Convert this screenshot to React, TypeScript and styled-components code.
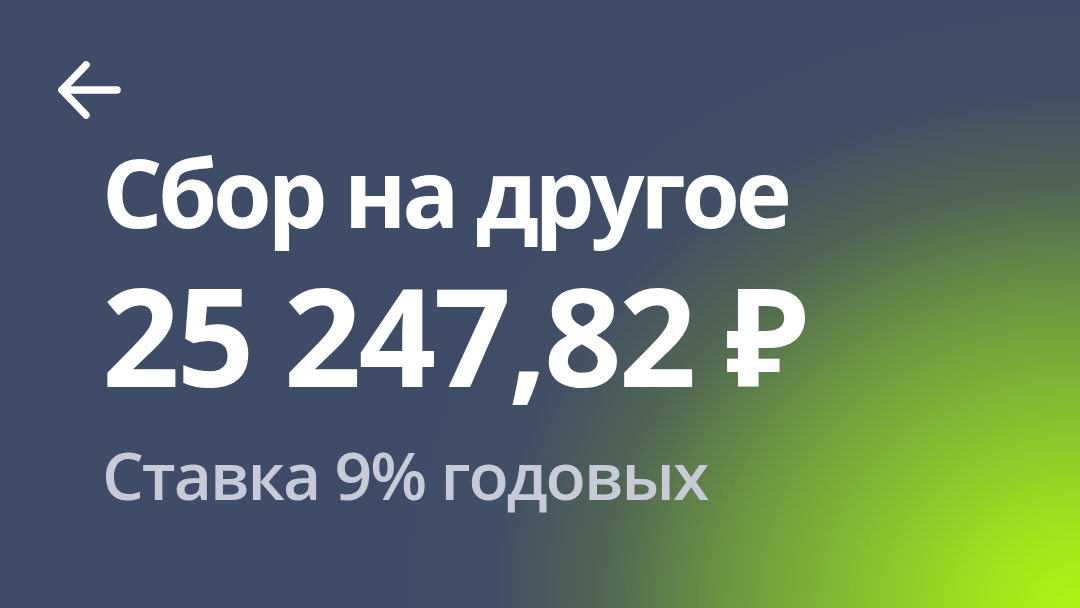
import React from "react";
import styled, { createGlobalStyle } from "styled-components";

const GlobalStyle = createGlobalStyle`
    html, body {
        margin: 0;
        padding: 0;
    }
    body {
        font-family: "Open Sans", "Noto Sans", sans-serif;
    }
`;

const Screen = styled.div`
    width: 1080px;
    height: 608px;
    overflow: hidden;
    box-sizing: border-box;
    padding: 52px 0 0 56px;
    display: flex;
    flex-direction: column;
    background:
        radial-gradient(ellipse 680px 600px at 1080px 610px, #b0f414 0%, #a3e51b 13%, #88c02f 32%, #6c9641 52%, rgba(84, 107, 80, 0.85) 70%, rgba(68, 84, 98, 0.45) 86%, rgba(62, 76, 103, 0) 100%),
        #3e4c67;
`;

const BackButton = styled.button`
    width: 72px;
    height: 76px;
    padding: 0;
    border: none;
    background: none;
    cursor: pointer;
    display: flex;
    align-items: center;
    justify-content: flex-start;
`;

const Content = styled.div`
    padding-left: 46px;
    display: flex;
    flex-direction: column;
`;

const Title = styled.h1`
    margin: 8px 0 0;
    font-size: 95px;
    font-weight: 700;
    line-height: 110px;
    color: #ffffff;
    letter-spacing: -4.3px;
`;

const Amount = styled.div`
    margin-top: 14px;
    font-size: 136px;
    font-weight: 700;
    line-height: 150px;
    color: #ffffff;
    letter-spacing: -3px;
`;

const Rate = styled.div`
    margin-top: 24px;
    font-size: 66px;
    font-weight: 600;
    line-height: 80px;
    color: #c6cbd7;
    letter-spacing: -2px;
`;

export default function App() {
    return (
        <>
            <GlobalStyle />
            <Screen>
                <BackButton aria-label="Назад">
                    <svg width="68" height="64" viewBox="0 0 68 64" fill="none">
                        <path
                            d="M61 32H6M6 32L30 7M6 32L30 57"
                            stroke="#ffffff"
                            strokeWidth="7.5"
                            strokeLinecap="round"
                            strokeLinejoin="round"
                        />
                    </svg>
                </BackButton>
                <Content>
                    <Title>Сбор на другое</Title>
                    <Amount>25 247,82 ₽</Amount>
                    <Rate>Ставка 9% годовых</Rate>
                </Content>
            </Screen>
        </>
    );
}
